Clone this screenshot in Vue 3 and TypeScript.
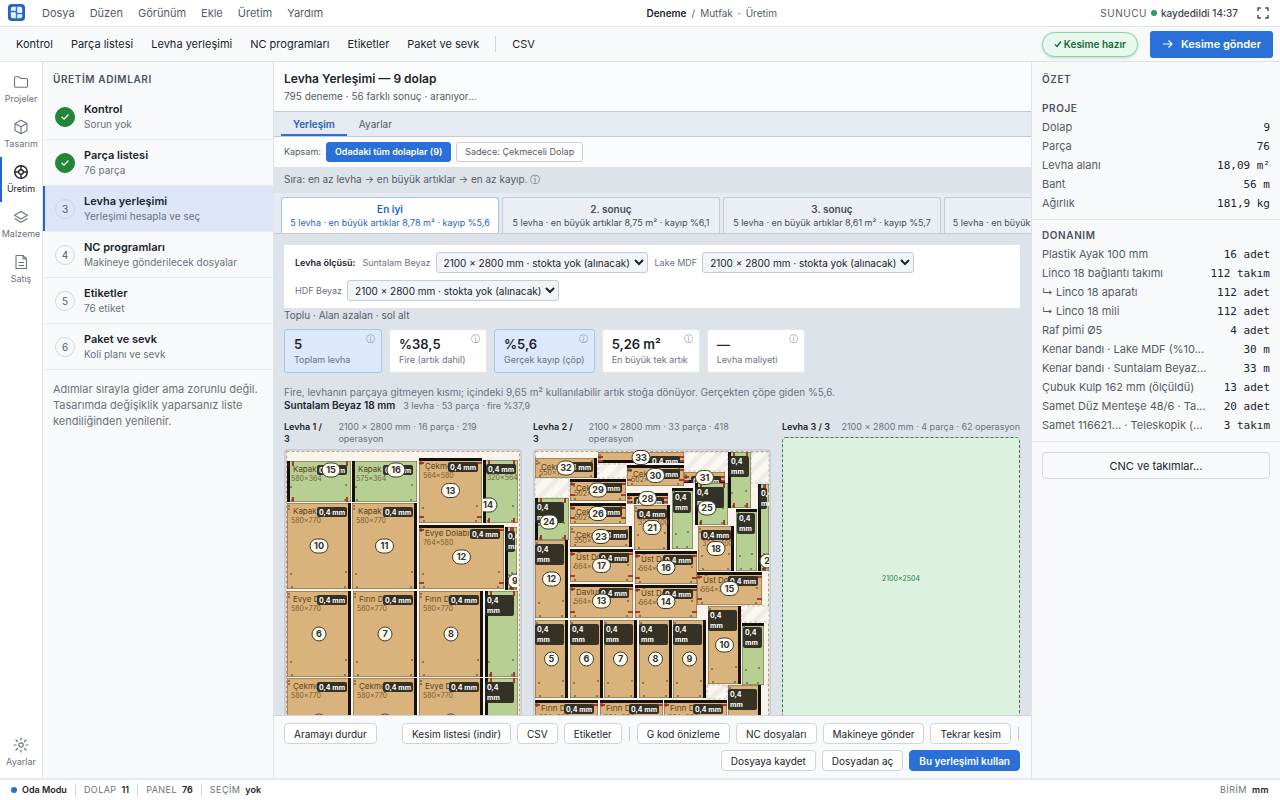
<script setup lang="ts">
import { ref } from 'vue'

interface Piece {
  x: number
  y: number
  w: number
  h: number
  color: 'wood' | 'green'
  band: 'top' | 'right' | 'bottom' | 'left'
  no?: string
  name?: string
  dims?: string
  tall?: boolean
  ticks?: 'h' | 'v'
  cx?: number
  cy?: number
}

interface Sheet {
  id: string
  title: string
  meta: string
  pieces: Piece[]
  scraps: number[][]
}

const menus = ['Dosya', 'Düzen', 'Görünüm', 'Ekle', 'Üretim', 'Yardım']
const tools = ['Kontrol', 'Parça listesi', 'Levha yerleşimi', 'NC programları', 'Etiketler', 'Paket ve sevk']

const rail = [
  { label: 'Projeler', icon: 'folder' },
  { label: 'Tasarım', icon: 'cube' },
  { label: 'Üretim', icon: 'target' },
  { label: 'Malzeme', icon: 'layers' },
  { label: 'Satış', icon: 'doc' },
]

const steps = [
  { title: 'Kontrol', sub: 'Sorun yok', done: true },
  { title: 'Parça listesi', sub: '76 parça', done: true },
  { title: 'Levha yerleşimi', sub: 'Yerleşimi hesapla ve seç', done: false },
  { title: 'NC programları', sub: 'Makineye gönderilecek dosyalar', done: false },
  { title: 'Etiketler', sub: '76 etiket', done: false },
  { title: 'Paket ve sevk', sub: 'Koli planı ve sevk', done: false },
]
const activeStep = ref(2)

const results = [
  { title: 'En iyi', sub: '5 levha · en büyük artıklar 8,78 m² · kayıp %5,6' },
  { title: '2. sonuç', sub: '5 levha · en büyük artıklar 8,75 m² · kayıp %6,1' },
  { title: '3. sonuç', sub: '5 levha · en büyük artıklar 8,61 m² · kayıp %5,7' },
  { title: '4. sonuç', sub: '5 levha · en büyük artıklar 8,60 m² · kayıp %5,9' },
]
const activeResult = ref(0)

const materials = ['Suntalam Beyaz', 'Lake MDF', 'HDF Beyaz']

const metrics = [
  { value: '5', label: 'Toplam levha', on: true },
  { value: '%38,5', label: 'Fire (artık dahil)', on: false },
  { value: '%5,6', label: 'Gerçek kayıp (çöp)', on: true },
  { value: '5,26 m²', label: 'En büyük tek artık', on: false },
  { value: '—', label: 'Levha maliyeti', on: false },
]

const project = [
  ['Dolap', '9'],
  ['Parça', '76'],
  ['Levha alanı', '18,09 m²'],
  ['Bant', '56 m'],
  ['Ağırlık', '181,9 kg'],
]
const hardware = [
  ['Plastik Ayak 100 mm', '16 adet'],
  ['Linco 18 bağlantı takımı', '112 takım'],
  ['↳ Linco 18 aparatı', '112 adet'],
  ['↳ Linco 18 mili', '112 adet'],
  ['Raf pimi Ø5', '4 adet'],
  ['Kenar bandı · Lake MDF (%10...', '30 m'],
  ['Kenar bandı · Suntalam Beyaz...', '33 m'],
  ['Çubuk Kulp 162 mm (ölçüldü)', '13 adet'],
  ['Samet Düz Menteşe 48/6 · Ta...', '20 adet'],
  ['Samet 116621... · Teleskopik (...', '3 takım'],
]

const sheets: Sheet[] = [
  {
    id: 's1',
    title: 'Levha 1 / 3',
    meta: '2100 × 2800 mm · 16 parça · 219 operasyon',
    scraps: [],
    pieces: [
      { x: 3, y: 12, w: 64, h: 41, color: 'green', band: 'left', no: '15', name: 'Kapak', dims: '580×364', ticks: 'v', cx: 47, cy: 21 },
      { x: 68, y: 12, w: 65, h: 41, color: 'green', band: 'left', no: '16', name: 'Kapak', dims: '575×364', cx: 112, cy: 21 },
      { x: 135, y: 9, w: 63, h: 65, color: 'wood', band: 'top', no: '13', name: 'Çekmeceli', dims: '564×580', ticks: 'h' },
      { x: 199, y: 11, w: 35, h: 63, color: 'green', band: 'left', no: '14', dims: '320×564', ticks: 'v', cx: 204, cy: 56 },
      { x: 3, y: 54, w: 64, h: 86, color: 'wood', band: 'right', no: '10', name: 'Kapak', dims: '580×770' },
      { x: 68, y: 54, w: 65, h: 86, color: 'wood', band: 'right', no: '11', name: 'Kapak', dims: '580×770' },
      { x: 135, y: 76, w: 85, h: 64, color: 'wood', band: 'top', no: '12', name: 'Evye Dolabı', dims: '764×580', ticks: 'h' },
      { x: 221, y: 78, w: 12, h: 63, color: 'green', band: 'left', no: '9', tall: true, ticks: 'v', cx: 231, cy: 132 },
      { x: 3, y: 142, w: 64, h: 86, color: 'wood', band: 'right', no: '6', name: 'Evye Dolabı', dims: '580×770' },
      { x: 69, y: 142, w: 64, h: 86, color: 'wood', band: 'right', no: '7', name: 'Fırın Dolabı', dims: '580×770' },
      { x: 135, y: 142, w: 64, h: 86, color: 'wood', band: 'right', no: '8', name: 'Fırın Dolabı', dims: '580×770' },
      { x: 201, y: 142, w: 33, h: 86, color: 'green', band: 'left', tall: true, ticks: 'v' },
      { x: 3, y: 229, w: 64, h: 86, color: 'wood', band: 'right', no: '3', name: 'Çekmeceli', dims: '580×770' },
      { x: 69, y: 229, w: 64, h: 86, color: 'wood', band: 'right', no: '4', name: 'Çekmeceli', dims: '580×770' },
      { x: 135, y: 229, w: 64, h: 86, color: 'wood', band: 'right', no: '5', name: 'Evye Dolabı', dims: '580×770' },
      { x: 201, y: 229, w: 33, h: 86, color: 'green', band: 'left', tall: true, ticks: 'v' },
    ],
  },
  {
    id: 's2',
    title: 'Levha 2 / 3',
    meta: '2100 × 2800 mm · 33 parça · 418 operasyon',
    scraps: [
      [65, 15, 29, 14],
      [151, 3, 44, 19],
      [218, 3, 18, 31],
      [2, 29, 34, 20],
      [209, 157, 27, 16],
      [174, 236, 20, 14],
    ],
    pieces: [
      { x: 2, y: 9, w: 62, h: 20, color: 'wood', band: 'right', no: '32', name: 'Çekmeceli', dims: '550×180' },
      { x: 65, y: 3, w: 86, h: 11, color: 'wood', band: 'bottom', no: '33', dims: '764×100', ticks: 'h' },
      { x: 94, y: 16, w: 57, h: 21, color: 'wood', band: 'top', no: '30', name: 'Çekmeceli', dims: '502×180', ticks: 'h' },
      { x: 151, y: 23, w: 41, h: 11, color: 'wood', band: 'bottom', no: '31', ticks: 'h' },
      { x: 195, y: 3, w: 23, h: 56, color: 'green', band: 'left', tall: true, ticks: 'v' },
      { x: 37, y: 30, w: 56, h: 22, color: 'wood', band: 'top', no: '29', name: 'Çekmeceli', dims: '502×190', ticks: 'h' },
      { x: 94, y: 44, w: 41, h: 11, color: 'wood', band: 'top', no: '28', ticks: 'h' },
      { x: 37, y: 54, w: 56, h: 21, color: 'wood', band: 'top', no: '26', name: 'Çekmeceli', dims: '502×180', ticks: 'h' },
      { x: 162, y: 34, w: 33, h: 42, color: 'green', band: 'left', no: '25', tall: true, ticks: 'v', cx: 174, cy: 59 },
      { x: 2, y: 49, w: 34, h: 42, color: 'green', band: 'left', no: '24', tall: true, ticks: 'v', cx: 16, cy: 73 },
      { x: 101, y: 56, w: 36, h: 45, color: 'wood', band: 'right', no: '21', dims: '320×400' },
      { x: 139, y: 39, w: 21, h: 61, color: 'green', band: 'top', tall: true },
      { x: 225, y: 35, w: 11, h: 87, color: 'green', band: 'left', no: '2', tall: true, ticks: 'v', cx: 234, cy: 112 },
      { x: 203, y: 60, w: 21, h: 62, color: 'green', band: 'top', tall: true },
      { x: 37, y: 77, w: 62, h: 21, color: 'wood', band: 'right', no: '23', name: 'Çekmeceli', dims: '550×180' },
      { x: 165, y: 77, w: 36, h: 45, color: 'wood', band: 'right', no: '18', dims: '320×400' },
      { x: 37, y: 100, w: 63, h: 33, color: 'wood', band: 'top', no: '17', name: 'Üst Dolap', dims: '564×300', ticks: 'h' },
      { x: 102, y: 102, w: 62, h: 33, color: 'wood', band: 'top', no: '16', name: 'Üst Dolap', dims: '564×300', ticks: 'h' },
      { x: 2, y: 91, w: 33, h: 78, color: 'wood', band: 'right', no: '12', tall: true },
      { x: 164, y: 123, w: 65, h: 33, color: 'wood', band: 'top', no: '15', name: 'Üst Dolap', dims: '564×300', ticks: 'h' },
      { x: 37, y: 135, w: 63, h: 34, color: 'wood', band: 'top', no: '13', name: 'Davlumbaz', dims: '564×300', ticks: 'h' },
      { x: 102, y: 136, w: 62, h: 33, color: 'wood', band: 'top', no: '14', name: 'Üst Dolap', dims: '564×300', ticks: 'h' },
      { x: 175, y: 157, w: 33, h: 78, color: 'wood', band: 'right', no: '10', tall: true },
      { x: 209, y: 174, w: 22, h: 62, color: 'green', band: 'top', tall: true },
      { x: 2, y: 171, w: 33, h: 78, color: 'wood', band: 'right', no: '5', tall: true },
      { x: 37, y: 171, w: 33, h: 78, color: 'wood', band: 'right', no: '6', tall: true },
      { x: 71, y: 171, w: 33, h: 78, color: 'wood', band: 'right', no: '7', tall: true },
      { x: 106, y: 171, w: 33, h: 78, color: 'wood', band: 'right', no: '8', tall: true },
      { x: 140, y: 171, w: 33, h: 78, color: 'wood', band: 'right', no: '9', tall: true },
      { x: 195, y: 236, w: 33, h: 78, color: 'wood', band: 'right', no: '4', tall: true },
      { x: 2, y: 251, w: 63, h: 63, color: 'wood', band: 'top', no: '1', name: 'Fırın Dolabı', dims: '564×560', ticks: 'h' },
      { x: 67, y: 251, w: 63, h: 63, color: 'wood', band: 'top', no: '2', name: 'Fırın Dolabı', dims: '564×560', ticks: 'h' },
      { x: 131, y: 251, w: 63, h: 63, color: 'wood', band: 'top', no: '3', name: 'Fırın Dolabı', dims: '564×560', ticks: 'h' },
    ],
  },
]

function band(p: Piece) {
  if (p.band === 'top') return { x: 0, y: 0, width: p.w, height: 3 }
  if (p.band === 'bottom') return { x: 0, y: p.h - 3, width: p.w, height: 3 }
  if (p.band === 'left') return { x: 0, y: 0, width: 3, height: p.h }
  return { x: p.w - 3, y: 0, width: 3, height: p.h }
}

function tag(p: Piece) {
  if (p.tall) return { x: p.w < 30 ? 1 : 0, y: 4, width: Math.min(29, p.w - 3), height: 21 }
  return { x: Math.max(3, p.w - 34), y: 4, width: 30, height: 10 }
}

function ticks(p: Piece) {
  if (p.ticks === 'h') {
    const low = p.h > 15 ? p.h - 7 : p.h - 3
    return [[0, 4, 5, 2], [p.w - 5, 4, 5, 2], [0, low, 5, 2], [p.w - 5, low, 5, 2]]
  }
  if (p.ticks === 'v') {
    return [[5, 0, 2, 5], [p.w - 5, 0, 2, 5], [5, p.h - 5, 2, 5], [p.w - 5, p.h - 5, 2, 5]]
  }
  return []
}

function holes(p: Piece) {
  return [[2, 3], [2, 6], [5, p.h - 2], [p.w - 6, p.h - 2], [4, p.h - 15], [p.w - 5, p.h - 17]]
}

function cx(p: Piece) {
  return (p.cx ?? p.x + p.w / 2) - p.x
}
function cy(p: Piece) {
  return (p.cy ?? p.y + p.h / 2) - p.y
}
</script>

<template>
  <div class="app">
    <header class="menubar">
      <svg class="logo" viewBox="0 0 18 18">
        <rect x="0" y="0" width="18" height="18" rx="4" fill="#2563c4" />
        <rect x="3" y="3" width="12" height="12" rx="2" fill="#eaf3ff" />
        <path d="M9 3v12M3 8h6M9 10h6" stroke="#2f74d6" stroke-width="1.5" />
      </svg>
      <nav class="menus">
        <button v-for="m in menus" :key="m">{{ m }}</button>
      </nav>
      <div class="crumbs"><b>Deneme</b><span>/</span><span>Mutfak</span><span>·</span><span>Üretim</span></div>
      <div class="server"><span class="caps">SUNUCU</span><i class="dot ok"></i><span class="saved">kaydedildi 14:37</span></div>
      <button class="full" aria-label="Tam ekran">
        <svg viewBox="0 0 12 12" width="12" height="12" fill="none" stroke="#4b5563" stroke-width="1.5">
          <path d="M1 4V1h3M8 1h3v3M11 8v3H8M4 11H1V8" />
        </svg>
      </button>
    </header>

    <div class="toolbar">
      <button v-for="t in tools" :key="t">{{ t }}</button>
      <i class="vline"></i>
      <button>CSV</button>
      <span class="ready">
        <svg viewBox="0 0 8 8" width="8" height="8" fill="none" stroke="#17683a" stroke-width="1.4"><path d="M1 4.5l2 2L7 1.5" /></svg>
        Kesime hazır
      </span>
      <button class="send">
        <svg viewBox="0 0 12 12" width="12" height="12" fill="none" stroke="#fff" stroke-width="1.2"><path d="M1 6h9M6.5 2.5L10 6l-3.5 3.5" /></svg>
        Kesime gönder
      </button>
    </div>

    <div class="body">
      <nav class="rail">
        <button v-for="r in rail" :key="r.label" :class="{ on: r.icon === 'target' }">
          <svg viewBox="0 0 16 16" width="16" height="16" fill="none" stroke="currentColor" stroke-width="1.1" stroke-linejoin="round">
            <path v-if="r.icon === 'folder'" d="M1.5 4a1.3 1.3 0 0 1 1.3-1.3h3.2l1.5 1.8h5.7a1.3 1.3 0 0 1 1.3 1.3v6.2a1.3 1.3 0 0 1-1.3 1.3H2.8A1.3 1.3 0 0 1 1.5 12z" />
            <path v-else-if="r.icon === 'cube'" d="M8 1.3l6 3.2v7L8 14.7l-6-3.2v-7zM2 4.5l6 3.3 6-3.3M8 7.8v6.9" />
            <g v-else-if="r.icon === 'target'" stroke-width="1.4">
              <circle cx="8" cy="8" r="6.3" />
              <circle cx="8" cy="8" r="2.3" />
              <path d="M8 1.7v4M8 10.3v4M1.7 8h4M10.3 8h4" />
            </g>
            <path v-else-if="r.icon === 'layers'" d="M8 2.5l6.5 3.7L8 9.9 1.5 6.2zM1.5 9.5L8 13.2l6.5-3.7" />
            <path v-else d="M3 1.5h7L13.5 5v9.5H3zM10 1.5V5h3.5M5.5 8.5H11M5.5 11.5H11" />
          </svg>
          <span>{{ r.label }}</span>
        </button>
        <button class="settings">
          <svg viewBox="0 0 16 16" width="16" height="16" fill="none" stroke="currentColor" stroke-width="1.2" stroke-linecap="round">
            <circle cx="8" cy="8" r="2.2" />
            <path d="M8 1v2M8 13v2M1 8h2M13 8h2M3 3l1.5 1.5M11.5 11.5L13 13M3 13l1.500-1.500M11.500 4.500L13 3" />
          </svg>
          <span>Ayarlar</span>
        </button>
      </nav>

      <aside class="steps">
        <h2>ÜRETİM ADIMLARI</h2>
        <button v-for="(s, i) in steps" :key="s.title" class="step" :class="{ active: i === activeStep }" @click="activeStep = i">
          <span class="num" :class="{ done: s.done }">
            <svg v-if="s.done" viewBox="0 0 8 8" width="8" height="8" fill="none" stroke="#fff" stroke-width="1.3" stroke-linecap="round"><path d="M1 4.3l2 1.9L7 2" /></svg>
            <template v-else>{{ i + 1 }}</template>
          </span>
          <span class="txt"><b>{{ s.title }}</b><small>{{ s.sub }}</small></span>
        </button>
        <p>Adımlar sırayla gider ama zorunlu değil. Tasarımda değişiklik yaparsanız liste kendiliğinden yenilenir.</p>
      </aside>

      <main class="center">
        <div class="head">
          <h1>Levha Yerleşimi — 9 dolap</h1>
          <p>795 deneme · 56 farklı sonuç · aranıyor...</p>
        </div>
        <div class="tabs">
          <button class="on">Yerleşim</button>
          <button>Ayarlar</button>
        </div>
        <div class="scope">
          <span>Kapsam:</span>
          <button class="on">Odadaki tüm dolaplar (9)</button>
          <button>Sadece: Çekmeceli Dolap</button>
        </div>
        <div class="order">Sıra: en az levha → en büyük artıklar → en az kayıp. ⓘ</div>
        <div class="results">
          <button v-for="(r, i) in results" :key="r.title" :class="{ on: i === activeResult }" @click="activeResult = i">
            <b>{{ r.title }}</b><span>{{ r.sub }}</span>
          </button>
        </div>

        <div class="scroll">
          <div class="sizes">
            <b>Levha ölçüsü:</b>
            <label v-for="m in materials" :key="m">
              {{ m }}
              <select><option>2100 × 2800 mm · stokta yok (alınacak)</option></select>
            </label>
          </div>
          <div class="method">Toplu · Alan azalan · sol alt</div>
          <div class="metrics">
            <div v-for="m in metrics" :key="m.label" class="metric" :class="{ on: m.on }">
              <b>{{ m.value }}</b><span>{{ m.label }}</span><i>ⓘ</i>
            </div>
          </div>
          <p class="waste">Fire, levhanın parçaya gitmeyen kısmı; içindeki 9,65 m² kullanılabilir artık stoğa dönüyor. Gerçekten çöpe giden %5,6.</p>
          <div class="group"><b>Suntalam Beyaz 18 mm</b><span>3 levha · 53 parça · fire %37,9</span></div>

          <div class="sheets">
            <section v-for="s in sheets" :key="s.id">
              <div class="cap"><b>{{ s.title }}</b><span>{{ s.meta }}</span></div>
              <svg class="sheet" viewBox="0 0 238 318">
                <defs>
                  <pattern :id="s.id + 'hatch'" width="12" height="12" patternUnits="userSpaceOnUse" patternTransform="rotate(-45)">
                    <rect width="12" height="12" fill="#faf8f3" />
                    <rect width="12" height="5" fill="#efece7" />
                  </pattern>
                  <clipPath v-for="(p, i) in s.pieces" :id="s.id + 'c' + i" :key="i">
                    <rect :width="p.w" :height="p.h" />
                  </clipPath>
                </defs>
                <rect x="1" y="1" width="236" height="316" rx="2" fill="#f8f4ec" stroke="#b3b7c1" />
                <rect x="2.5" y="2.5" width="233" height="313" fill="none" stroke="#b99f8a" stroke-dasharray="3 2" />
                <rect
                  v-for="(r, i) in s.scraps" :key="'r' + i" :x="r[0]" :y="r[1]" :width="r[2]" :height="r[3]"
                  :fill="'url(#' + s.id + 'hatch)'" stroke="#b9b2a6" stroke-width="0.7" stroke-dasharray="3 2"
                />
                <g
                  v-for="(p, i) in s.pieces" :key="i" :transform="'translate(' + p.x + ' ' + p.y + ')'"
                  :clip-path="'url(#' + s.id + 'c' + i + ')'"
                >
                  <rect :width="p.w" :height="p.h" class="board" :class="p.color" />
                  <rect v-bind="band(p)" fill="#15120d" />
                  <rect v-for="(t, j) in ticks(p)" :key="'t' + j" :x="t[0]" :y="t[1]" :width="t[2]" :height="t[3]" fill="#a8392f" />
                  <circle v-for="(h, j) in holes(p)" :key="'h' + j" :cx="h[0]" :cy="h[1]" r="0.8" fill="#3a2a18" />
                  <text v-if="p.name" x="6" :y="p.h < 30 ? 12 : 11" class="pname">{{ p.name }}</text>
                  <text v-if="p.dims" x="4" :y="p.h < 30 ? 17 : 20" class="pdims">{{ p.dims }}</text>
                  <rect v-bind="tag(p)" rx="2" fill="#2b2820" fill-opacity="0.94" />
                  <template v-if="p.tall">
                    <text :x="tag(p).x + 2" y="12" class="ptag">0,4</text>
                    <text :x="tag(p).x + 2" y="22" class="ptag">mm</text>
                  </template>
                  <text v-else :x="tag(p).x + 2" y="12" class="ptag">0,4 mm</text>
                </g>
                <g v-for="(p, i) in s.pieces" :key="'n' + i" :transform="'translate(' + p.x + ' ' + p.y + ')'">
                  <g v-if="p.no" :clip-path="p.cx && p.h > 45 ? 'url(#' + s.id + 'c' + i + ')' : undefined">
                    <rect
                      :x="cx(p) - (p.no.length > 1 ? 9 : 7)" :y="cy(p) - 7" :width="p.no.length > 1 ? 18 : 14" height="14" rx="7"
                      fill="#fffbea" stroke="#3a3a35"
                    />
                    <text :x="cx(p)" :y="cy(p) + 3" class="pno">{{ p.no }}</text>
                  </g>
                </g>
              </svg>
            </section>
            <section>
              <div class="cap"><b>Levha 3 / 3</b><span>2100 × 2800 mm · 4 parça · 62 operasyon</span></div>
              <svg class="sheet" viewBox="0 0 238 318">
                <rect x="1" y="1" width="236" height="316" rx="2" fill="#f8f4ec" stroke="#b3b7c1" />
                <rect x="0.5" y="0.5" width="237" height="284" rx="3" fill="#dcf1e0" stroke="#2f7d50" stroke-dasharray="3 2" />
                <text x="119" y="144" class="offcut">2100×2504</text>
              </svg>
            </section>
          </div>
        </div>

        <div class="actions">
          <button class="first">Aramayı durdur</button>
          <button>Kesim listesi (indir)</button>
          <button>CSV</button>
          <button>Etiketler</button>
          <i></i>
          <button>G kod önizleme</button>
          <button>NC dosyaları</button>
          <button>Makineye gönder</button>
          <button>Tekrar kesim</button>
          <i></i>
          <button>Dosyaya kaydet</button>
          <button>Dosyadan aç</button>
          <button class="primary">Bu yerleşimi kullan</button>
        </div>
      </main>

      <aside class="summary">
        <h2>ÖZET</h2>
        <section>
          <h3>PROJE</h3>
          <dl><div v-for="r in project" :key="r[0]"><dt>{{ r[0] }}</dt><dd>{{ r[1] }}</dd></div></dl>
        </section>
        <section>
          <h3>DONANIM</h3>
          <dl><div v-for="r in hardware" :key="r[0]"><dt>{{ r[0] }}</dt><dd>{{ r[1] }}</dd></div></dl>
        </section>
        <button>CNC ve takımlar...</button>
      </aside>
    </div>

    <footer class="status">
      <i class="dot mode"></i><b>Oda Modu</b>
      <span>DOLAP <b>11</b></span>
      <span>PANEL <b>76</b></span>
      <span>SEÇİM <b>yok</b></span>
      <em>BİRİM <b>mm</b></em>
    </footer>
  </div>
</template>

<style>
body {
  background: #fff;
}
</style>

<style scoped>
* {
  box-sizing: border-box;
}
.app {
  height: 100vh;
  display: flex;
  flex-direction: column;
  overflow: hidden;
  font: 11px/14px Inter, 'Noto Sans', sans-serif;
  color: #20242c;
}
button {
  font: inherit;
  color: inherit;
  background: none;
  border: 0;
  padding: 0;
  white-space: nowrap;
}
h1, h2, h3, p, dl, dd {
  margin: 0;
}
b {
  font-weight: 600;
}
.menubar {
  flex: 0 0 27px;
  display: flex;
  align-items: center;
  padding: 0 11px 1px 8px;
  border-bottom: 1px solid #dfe3e8;
  color: #555b66;
}
.logo {
  width: 17px;
  height: 17px;
}
.menus {
  display: flex;
  gap: 15px;
  margin-left: 17px;
}
.crumbs {
  flex: 1;
  display: flex;
  justify-content: center;
  gap: 5px;
  font-size: 10px;
}
.crumbs b {
  color: #20242c;
}
.server {
  display: flex;
  align-items: center;
  gap: 4px;
  font-size: 10px;
}
.caps {
  letter-spacing: 0.05em;
}
.saved {
  font-weight: 500;
  color: #3c424d;
}
.dot {
  width: 6px;
  height: 6px;
  border-radius: 50%;
}
.ok {
  background: #27a05a;
}
.mode {
  background: #2670d8;
}
.full {
  margin-left: 19px;
  display: flex;
}
.toolbar {
  flex: 0 0 35px;
  display: flex;
  align-items: center;
  gap: 18px;
  padding: 0 7px 0 16px;
  background: #f7f9fb;
  border-bottom: 1px solid #dfe3e8;
}
.toolbar .vline {
  width: 1px;
  height: 16px;
  margin: 0 -2px;
  background: #cfd4da;
}
.ready {
  margin-left: auto;
  margin-right: -6px;
  display: flex;
  align-items: center;
  gap: 2px;
  height: 25px;
  padding: 0 11px;
  border: 1px solid #8fd0a8;
  border-radius: 13px;
  background: #e9f8ef;
  color: #17683a;
  font-size: 10px;
  font-weight: 600;
  box-shadow: 0 1px 3px #b9d8c6;
}
.toolbar .send {
  display: flex;
  align-items: center;
  gap: 7px;
  height: 27px;
  padding: 0 12px;
  border-radius: 3px;
  background: #2a70d8;
  color: #fff;
  font-weight: 600;
}
.body {
  flex: 1;
  min-height: 0;
  display: grid;
  grid-template-columns: 43px 231px minmax(0, 1fr) 249px;
}
.rail {
  display: flex;
  flex-direction: column;
  padding-top: 5px;
  border-right: 1px solid #e0e4e8;
  font-size: 9px;
  line-height: 12px;
  color: #6b7280;
}
.rail button {
  height: 45px;
  display: flex;
  flex-direction: column;
  align-items: center;
  justify-content: center;
  gap: 3px;
}
.rail .on {
  color: #20242c;
  box-shadow: inset 2px 0 #2563d0;
}
.rail .settings {
  margin-top: auto;
  margin-bottom: 3px;
}
.steps {
  background: #f7f9fb;
  border-right: 1px solid #dfe3e8;
}
.steps h2, .summary h2, .summary h3 {
  font-size: 10px;
  line-height: 14px;
  font-weight: 600;
  letter-spacing: 0.06em;
  color: #4b5260;
}
.steps h2 {
  padding: 10px 10px 8px;
}
.step {
  width: 100%;
  height: 46px;
  display: flex;
  align-items: center;
  gap: 9px;
  padding: 0 11px 0 12px;
  border-bottom: 1px solid #e8ebef;
  text-align: left;
}
.step.active {
  background: #dde6f8;
  box-shadow: inset 2px 0 #2563d0;
}
.num {
  width: 20px;
  height: 20px;
  border: 1px solid #d3d8df;
  border-radius: 50%;
  display: flex;
  align-items: center;
  justify-content: center;
  font-size: 10px;
  color: #555b66;
}
.num.done {
  background: #238636;
  border-color: #238636;
}
.txt {
  display: flex;
  flex-direction: column;
  gap: 1px;
}
.txt b {
  font-size: 11px;
}
.txt small {
  font-size: 10px;
  color: #6b7280;
}
.steps p {
  padding: 11px 10px;
  line-height: 16px;
  color: #6b7280;
}
.center {
  display: flex;
  flex-direction: column;
  min-height: 0;
  background: #dee3ea;
}
.head {
  flex: 0 0 50px;
  padding: 9px 10px 0;
  background: #fbfcfd;
  border-bottom: 1px solid #c5cbd3;
}
.head h1 {
  font-size: 12px;
  line-height: 16px;
  font-weight: 600;
}
.head p {
  margin-top: 1px;
  font-size: 10px;
  line-height: 16px;
  color: #555b66;
}
.tabs {
  flex: 0 0 25px;
  display: flex;
  padding: 0 7px;
  background: #e6eaf1;
  border-bottom: 1px solid #c5cbd3;
  font-size: 10px;
  color: #555b66;
}
.tabs button {
  padding: 0 12px;
}
.tabs .on {
  color: #2563c4;
  font-weight: 600;
  box-shadow: inset 0 -2px #2a70d8;
}
.scope {
  flex: 0 0 30px;
  display: flex;
  align-items: center;
  gap: 5px;
  padding: 0 10px;
  background: #fbfcfd;
  font-size: 9px;
  color: #555b66;
}
.scope button {
  height: 20px;
  padding: 0 8px;
  border: 1px solid #c9ced6;
  border-radius: 3px;
  background: #fff;
}
.scope .on {
  background: #2a70d8;
  border-color: #2a70d8;
  color: #fff;
  font-weight: 600;
}
.order {
  flex: 0 0 26px;
  padding: 0 10px;
  font-size: 10px;
  line-height: 25px;
  color: #555b66;
}
.results {
  flex: 0 0 41px;
  display: flex;
  gap: 3px;
  padding: 4px 0 0 7px;
  overflow: hidden;
  background: #e6eaf1;
  border-bottom: 1px solid #c5cbd3;
}
.results button {
  flex: 0 0 218px;
  display: flex;
  flex-direction: column;
  align-items: center;
  justify-content: center;
  border: 1px solid #c5ccd6;
  border-bottom: 0;
  border-radius: 3px 3px 0 0;
  background: #ebeff5;
  color: #464c58;
  font-size: 9px;
  line-height: 14px;
}
.results b {
  font-size: 10px;
}
.results .on {
  background: #fff;
  border-color: #a3c0ee;
  color: #2563c4;
}
.scroll {
  flex: 1;
  min-height: 0;
  overflow: hidden;
  padding: 11px 11px 0 10px;
}
.sizes {
  display: flex;
  flex-wrap: wrap;
  align-items: center;
  gap: 7px;
  padding: 7px 11px;
  background: #fff;
  font-size: 9px;
}
.sizes label {
  display: flex;
  align-items: center;
  gap: 5px;
  color: #6b7280;
}
.sizes select {
  width: 212px;
  height: 21px;
  padding: 0 0 0 3px;
  border: 1px solid #c5ccd6;
  border-radius: 3px;
  background: #f1f4f8;
  color: #20242c;
  font: 10px Inter, sans-serif;
}
.method {
  font-size: 10px;
  color: #555b66;
}
.metrics {
  display: flex;
  gap: 7px;
  margin-top: 7px;
}
.metric {
  position: relative;
  min-width: 98px;
  height: 44px;
  padding: 6px 9px;
  display: flex;
  flex-direction: column;
  border: 1px solid #e3e7ed;
  border-radius: 3px;
  background: #fff;
}
.metric.on {
  background: #dce8fc;
  border-color: #a3c4f5;
}
.metric b {
  font-size: 13px;
  line-height: 16px;
}
.metric span {
  font-size: 9px;
  line-height: 15px;
  color: #6b7280;
}
.metric i {
  position: absolute;
  top: 3px;
  right: 6px;
  font-size: 9px;
  line-height: 12px;
  font-style: normal;
  color: #8a909b;
}
.waste {
  margin-top: 12px;
  font-size: 10px;
  color: #6b7280;
}
.group {
  display: flex;
  gap: 8px;
  font-size: 10px;
  line-height: 13px;
}
.group span {
  font-size: 9px;
  color: #6b7280;
}
.sheets {
  display: grid;
  grid-template-columns: repeat(3, minmax(0, 1fr));
  gap: 11px;
  margin-top: 9px;
}
.cap {
  display: flex;
  justify-content: space-between;
  gap: 9px;
  font-size: 9px;
  line-height: 12px;
  padding-bottom: 4px;
}
.cap span {
  color: #6b7280;
}
.sheet {
  display: block;
  width: 100%;
}
.board {
  stroke: #6d5a36;
  stroke-width: 1;
}
.wood {
  fill: #d9b27c;
}
.green {
  fill: #b8cf94;
}
.pname {
  font-size: 8px;
  fill: #5a4320;
}
.pdims {
  font-size: 7px;
  fill: #5a4320;
  fill-opacity: 0.8;
}
.ptag {
  font-size: 7px;
  font-weight: 700;
  fill: #fff;
}
.pno {
  font-size: 9px;
  font-weight: 700;
  fill: #2b3340;
  text-anchor: middle;
}
.offcut {
  font-size: 7px;
  fill: #2f7d50;
  text-anchor: middle;
}
.actions {
  display: flex;
  flex-wrap: wrap;
  justify-content: flex-end;
  align-items: center;
  gap: 6px;
  padding: 7px 11px 7px 10px;
  background: #f7f9fb;
  border-top: 1px solid #cfd4da;
  font-size: 10px;
}
.actions button {
  height: 21px;
  padding: 0 9px;
  border: 1px solid #cfd4da;
  border-radius: 4px;
  background: #fff;
}
.actions .first {
  margin-right: auto;
}
.actions i {
  width: 1px;
  height: 14px;
  margin: 0 1px;
  background: #c5cbd3;
}
.actions .primary {
  background: #2a70d8;
  border-color: #2a70d8;
  color: #fff;
  font-weight: 600;
}
.summary {
  background: #f7f9fb;
  border-left: 1px solid #dfe3e8;
}
.summary h2 {
  padding: 10px 10px 7px;
}
.summary section {
  padding: 8px 10px 6px;
  border-bottom: 1px solid #e3e7eb;
}
.summary h3 {
  margin-bottom: 3px;
}
.summary dl div {
  display: flex;
  justify-content: space-between;
  line-height: 19px;
}
.summary dt {
  color: #555b66;
}
.summary dd {
  font-family: 'DejaVu Sans Mono', monospace;
}
.summary button {
  display: block;
  width: calc(100% - 20px);
  height: 27px;
  margin: 10px;
  border: 1px solid #d3d8df;
  border-radius: 4px;
}
.status {
  flex: 0 0 22px;
  display: flex;
  align-items: center;
  padding: 0 11px;
  border-top: 2px solid #e6e9ed;
  font-size: 9px;
  color: #6b7280;
}
.status b {
  color: #20242c;
  margin-left: 2px;
}
.status .dot + b {
  margin-left: 5px;
}
.status span {
  margin-left: 8px;
  padding-left: 8px;
  border-left: 1px solid #d3d8df;
  letter-spacing: 0.05em;
}
.status span b {
  letter-spacing: 0;
}
.status em {
  margin-left: auto;
  font-style: normal;
  letter-spacing: 0.05em;
}
</style>
